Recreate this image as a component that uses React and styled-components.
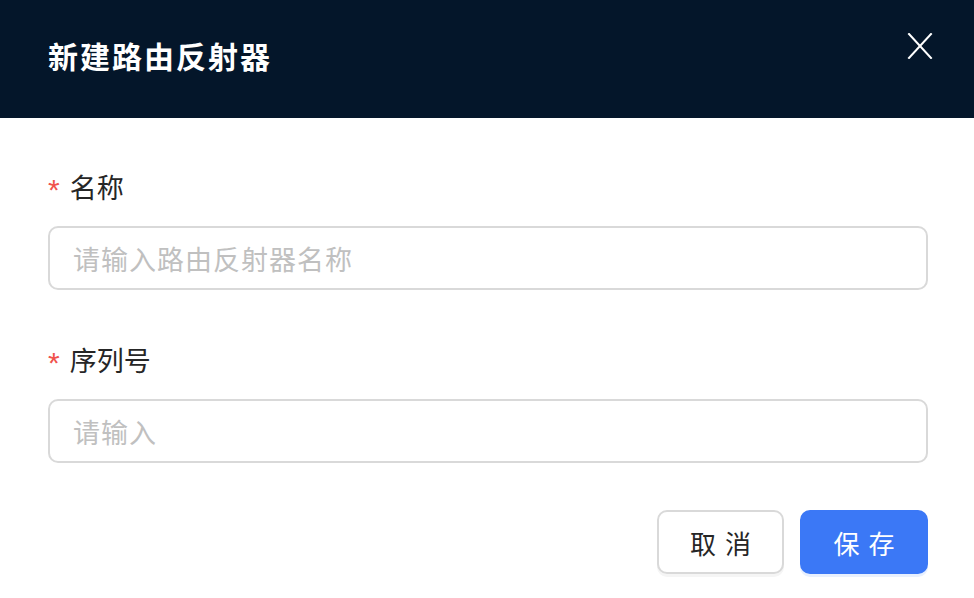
import React from 'react';
import styled, { createGlobalStyle } from 'styled-components';

const GlobalStyle = createGlobalStyle`
  html, body {
    margin: 0;
    padding: 0;
    background: #ffffff;
  }
  * {
    box-sizing: border-box;
  }
`;

const Modal = styled.div`
  width: 974px;
  height: 598px;
  background: #ffffff;
  font-family: "Noto Sans CJK SC", "Noto Sans", sans-serif;
  display: flex;
  flex-direction: column;
`;

const Header = styled.div`
  height: 118px;
  background: #04162a;
  display: flex;
  align-items: center;
  justify-content: space-between;
  padding: 0 41px 8px 48px;
`;

const Title = styled.h2`
  margin: 0;
  color: #ffffff;
  font-size: 30px;
  font-weight: 700;
  letter-spacing: 2px;
`;

const CloseButton = styled.button`
  border: none;
  background: none;
  padding: 0;
  width: 26px;
  height: 26px;
  margin-top: -18px;
  cursor: pointer;
  display: flex;
  align-items: center;
  justify-content: center;
`;

const Body = styled.div`
  padding: 51px 46px 0 48px;
  display: flex;
  flex-direction: column;
`;

const Field = styled.div`
  display: flex;
  flex-direction: column;
  gap: 21px;
  margin-bottom: 52px;

  &:last-child {
    margin-bottom: 0;
  }
`;

const Label = styled.label`
  display: flex;
  align-items: center;
  gap: 10px;
  font-size: 27px;
  color: #262626;
  line-height: 36px;
`;

const Required = styled.span`
  color: #f0524d;
  font-size: 30px;
  font-family: "Liberation Sans", sans-serif;
  line-height: 1;
  margin-top: 6px;
`;

const Input = styled.input`
  width: 880px;
  height: 64px;
  border: 2px solid #d9d9d9;
  border-radius: 10px;
  padding: 0 23px;
  font-family: "Noto Sans CJK SC", "Noto Sans", sans-serif;
  font-size: 27px;
  letter-spacing: 1px;
  color: #262626;
  outline: none;

  &::placeholder {
    color: #c0c0c0;
  }
`;

const Footer = styled.div`
  display: flex;
  justify-content: flex-end;
  gap: 16px;
  padding: 47px 46px 0 0;
`;

const Button = styled.button`
  width: ${p => (p.$primary ? '128px' : '127px')};
  height: 64px;
  border-radius: 10px;
  font-family: "Noto Sans CJK SC", "Noto Sans", sans-serif;
  font-size: 26px;
  letter-spacing: 9px;
  padding: 0 0 0 9px;
  cursor: pointer;
  border: 2px solid ${p => (p.$primary ? '#3b78f6' : '#d9d9d9')};
  background: ${p => (p.$primary ? '#3b78f6' : '#ffffff')};
  color: ${p => (p.$primary ? '#ffffff' : '#262626')};
  box-shadow: 0 3px 0 ${p => (p.$primary ? '#e8f0fe' : '#f5f5f5')};
`;

const fields = [
  { label: '名称', placeholder: '请输入路由反射器名称' },
  { label: '序列号', placeholder: '请输入' }
];

export default function App() {
  return (
    <>
      <GlobalStyle />
      <Modal>
        <Header>
          <Title>新建路由反射器</Title>
          <CloseButton aria-label="close">
            <svg width="26" height="26" viewBox="0 0 26 26" fill="none" stroke="#ffffff" strokeWidth="2" strokeLinecap="square">
              <line x1="2" y1="1" x2="24" y2="25" />
              <line x1="24" y1="1" x2="2" y2="25" />
            </svg>
          </CloseButton>
        </Header>
        <Body>
          {fields.map(f => (
            <Field key={f.label}>
              <Label>
                <Required>*</Required>
                {f.label}
              </Label>
              <Input placeholder={f.placeholder} />
            </Field>
          ))}
        </Body>
        <Footer>
          <Button>取消</Button>
          <Button $primary>保存</Button>
        </Footer>
      </Modal>
    </>
  );
}
